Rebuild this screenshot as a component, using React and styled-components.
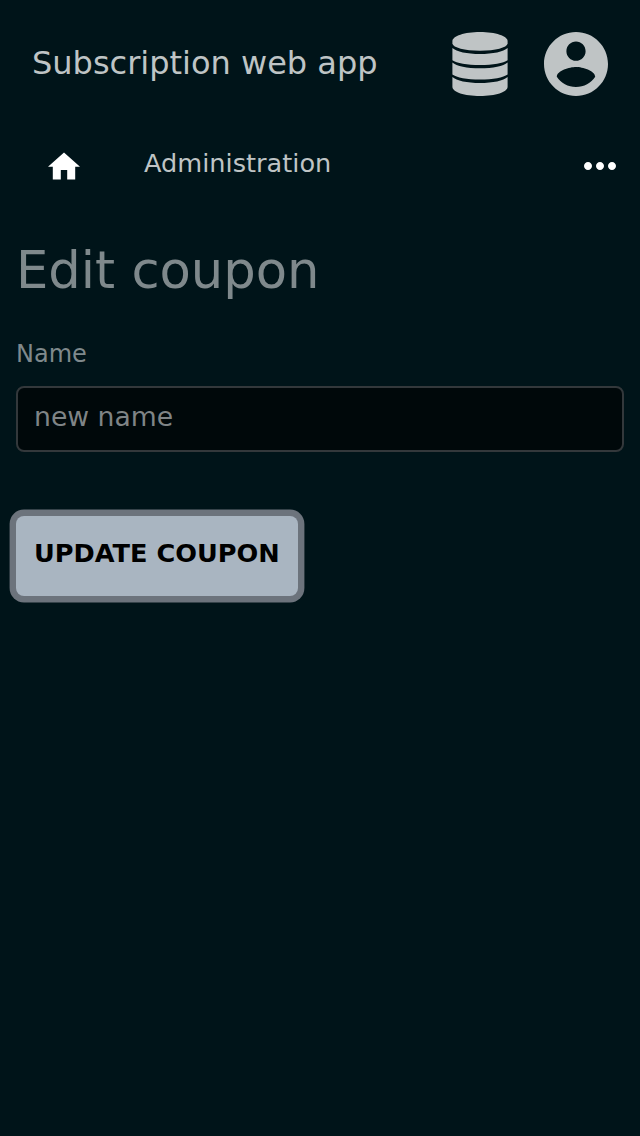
import React from "react";
import styled, { createGlobalStyle } from "styled-components";

const GlobalStyle = createGlobalStyle`
  * { box-sizing: border-box; }
  html, body { margin: 0; background: #001419; }
  body { font-family: "DejaVu Sans", sans-serif; }
`;

const Page = styled.div`
  min-height: 1136px;
  background: #001419;
  color: #7f898c;
`;

const Header = styled.header`
  display: flex;
  align-items: center;
  height: 128px;
  padding: 0 32px;
  color: #bfc4c5;
`;

const Brand = styled.div`
  flex: 1;
  margin-bottom: 2px;
  font-size: 32px;
  line-height: 48px;
  white-space: nowrap;
`;

const HeaderIcons = styled.div`
  display: flex;
  gap: 32px;
`;

const Icon = styled.svg`
  display: block;
  width: ${(p) => p.$w}px;
  height: ${(p) => p.$h}px;
  fill: currentColor;
`;

const Nav = styled.nav`
  display: flex;
  align-items: center;
  height: 76px;
  padding: 0 24px 0 48px;
  color: #fff;
`;

const NavLink = styled.a`
  flex: 1;
  margin: 0 0 7px 64px;
  font-size: 25.6px;
  line-height: 38px;
  color: #bfc4c5;
`;

const Main = styled.main`
  padding: 28px 16px 0;
`;

const Heading = styled.h1`
  margin: 0;
  font-size: 51.2px;
  line-height: 76px;
  font-weight: 400;
`;

const Label = styled.label`
  display: block;
  margin-top: 28px;
  font-size: 24px;
  line-height: 36px;
`;

const Input = styled.input`
  display: block;
  width: 100%;
  height: 66px;
  margin-top: 14px;
  padding: 0 16px 6px;
  border: 2px solid #33383b;
  border-radius: 8px;
  outline: none;
  background: #00080a;
  color: #7f8486;
  font: 26.6667px "DejaVu Sans", sans-serif;
`;

const Button = styled.button`
  display: block;
  height: 80px;
  margin-top: 64px;
  padding: 0 18px 6px;
  border: 0;
  border-radius: 8px;
  background: #a9b5c1;
  box-shadow: 0 0 0 6.4px #6c737c;
  color: #000;
  font: bold 25.6px "DejaVu Sans", sans-serif;
  text-transform: uppercase;
  white-space: nowrap;
`;

const DatabaseIcon = () => (
  <Icon $w={64} $h={64} viewBox="0 0 64 64">
    <path d="M32 0C47.5 0 59.6 4.2 59.6 9v2.5C59 15.7 47.5 18.7 32 18.7S5 15.7 4.4 11.5V9C4.4 4.2 16.5 0 32 0z" />
    <path d="M4.4 16C8.5 19.8 19 22 32 22s23.500-2.200 27.600-6v12.300C55.500 31.300 45 33.100 32 33.100S8.500 31.300 4.400 28.300z" />
    <path d="M4.400 30.500C8.500 34.200 19 36.300 32 36.300s23.500-2.100 27.600-5.800v11.900C55.500 45.500 45 47.400 32 47.400S8.500 45.500 4.400 42.400z" />
    <path d="M4.400 44.900C8.500 48.600 19 50.900 32 50.900s23.500-2.300 27.600-6v9.900C59.600 60.200 47.500 64 32 64S4.400 60.200 4.400 54.800z" />
  </Icon>
);

const AccountIcon = () => (
  <Icon $w={64} $h={64} viewBox="2 2 20 20">
    <path d="M12 2C6.48 2 2 6.48 2 12s4.48 10 10 10 10-4.48 10-10S17.52 2 12 2zm0 3c1.66 0 3 1.34 3 3s-1.34 3-3 3-3-1.34-3-3 1.34-3 3-3zm0 14.2c-2.5 0-4.71-1.28-6-3.22.03-1.99 4-3.08 6-3.08 1.99 0 5.97 1.09 6 3.08-1.29 1.94-3.5 3.22-6 3.22z" />
  </Icon>
);

const HomeIcon = () => (
  <Icon $w={32} $h={32} viewBox="2 1.5 20 20">
    <path d="M10 20v-6h4v6h5v-8h3L12 3 2 12h3v8z" />
  </Icon>
);

const MoreIcon = () => (
  <Icon $w={32} $h={32} viewBox="4 4 16 16">
    <path d="M6 10c-1.1 0-2 .9-2 2s.9 2 2 2 2-.9 2-2-.9-2-2-2zm12 0c-1.1 0-2 .9-2 2s.9 2 2 2 2-.9 2-2-.9-2-2-2zm-6 0c-1.1 0-2 .9-2 2s.9 2 2 2 2-.9 2-2-.9-2-2-2z" />
  </Icon>
);

export default function App() {
  return (
    <Page>
      <GlobalStyle />
      <Header>
        <Brand>Subscription web app</Brand>
        <HeaderIcons>
          <DatabaseIcon />
          <AccountIcon />
        </HeaderIcons>
      </Header>
      <Nav>
        <HomeIcon />
        <NavLink>Administration</NavLink>
        <MoreIcon />
      </Nav>
      <Main>
        <Heading>Edit coupon</Heading>
        <Label htmlFor="name">Name</Label>
        <Input id="name" defaultValue="new name" />
        <Button type="button">Update coupon</Button>
      </Main>
    </Page>
  );
}
